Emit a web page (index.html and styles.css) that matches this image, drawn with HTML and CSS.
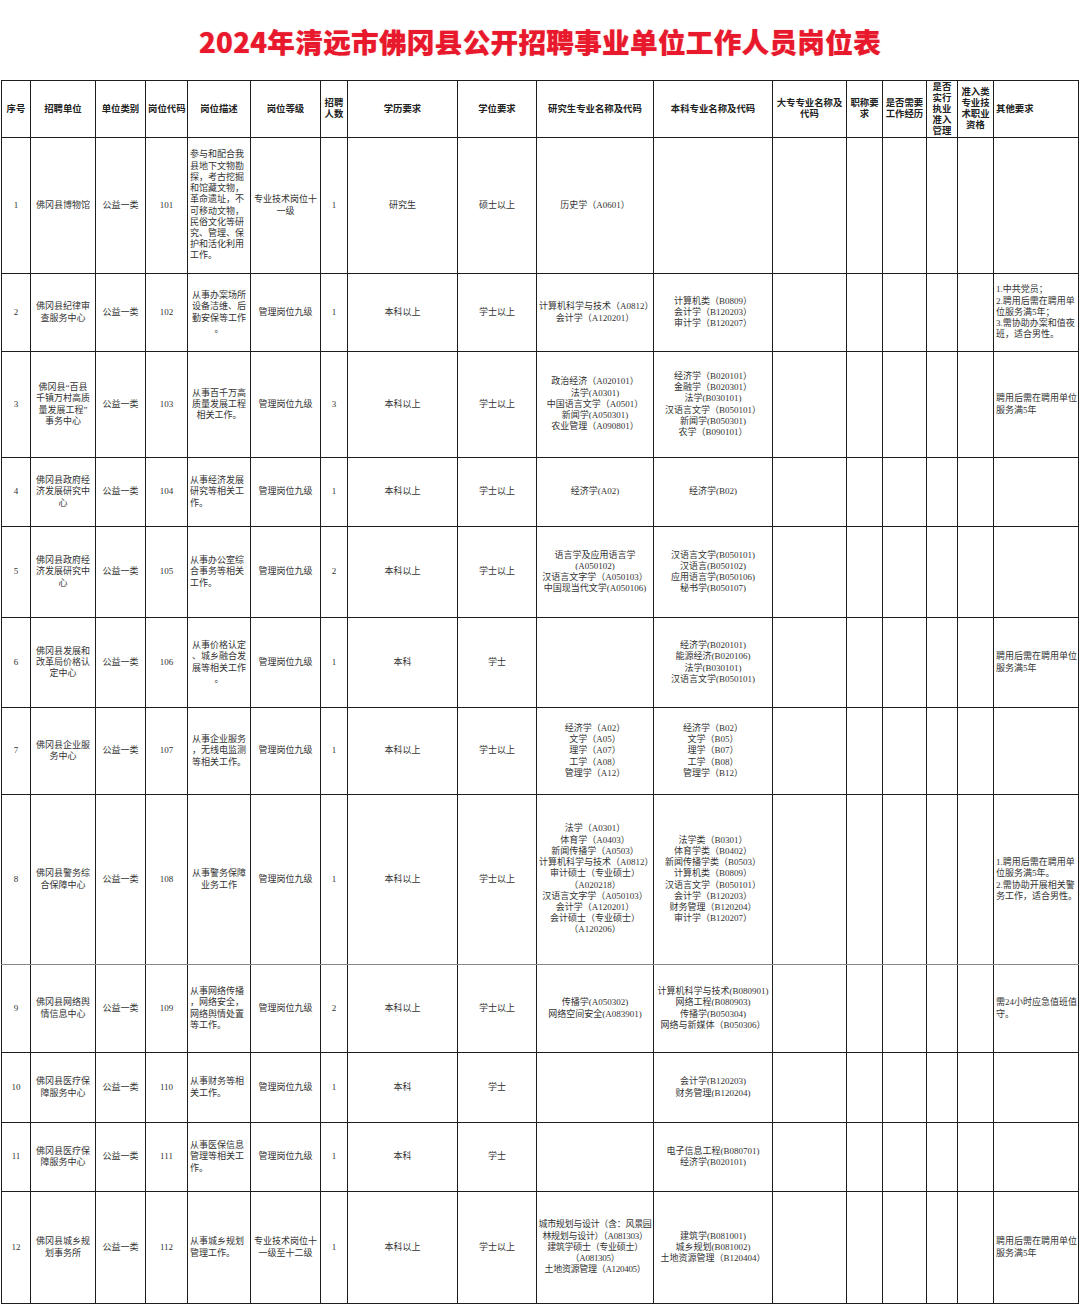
FILE: index.html
```html
<!DOCTYPE html>
<html lang="zh-CN">
<head>
<meta charset="utf-8">
<title>2024年清远市佛冈县公开招聘事业单位工作人员岗位表</title>
<link rel="stylesheet" href="styles.css">
</head>
<body>
<div class="title-bar"><h1 class="title">2024年清远市佛冈县公开招聘事业单位工作人员岗位表</h1></div>
<table class="jobs">
<colgroup>
<col class="c1"><col class="c2"><col class="c3"><col class="c4"><col class="c5"><col class="c6"><col class="c7"><col class="c8"><col class="c9"><col class="c10"><col class="c11"><col class="c12"><col class="c13"><col class="c14"><col class="c15"><col class="c16"><col class="c17">
</colgroup>
<thead>
<tr class="rh">
<th>序号</th><th>招聘单位</th><th>单位类别</th><th>岗位代码</th><th>岗位描述</th><th>岗位等级</th><th>招聘<br>人数</th><th>学历要求</th><th>学位要求</th><th>研究生专业名称及代码</th><th>本科专业名称及代码</th><th>大专专业名称及<br>代码</th><th>职称要<br>求</th><th class="g">是否需要<br>工作经历</th><th>是否<br>实行<br>执业<br>准入<br>管理</th><th class="g">准入类<br>专业技<br>术职业<br>资格</th><th class="l">其他要求</th>
</tr>
</thead>
<tbody>
<tr class="r1">
<td>1</td><td>佛冈县博物馆</td><td>公益一类</td><td>101</td><td class="l">参与和配合我<br>县地下文物勘<br>探，考古挖掘<br>和馆藏文物，<br>革命遗址，不<br>可移动文物，<br>民俗文化等研<br>究、管理、保<br>护和活化利用<br>工作。</td><td>专业技术岗位十<br>一级</td><td>1</td><td>研究生</td><td>硕士以上</td><td>历史学（A0601）</td><td></td><td></td><td></td><td class="g"></td><td></td><td class="g"></td><td class="l"></td>
</tr>
<tr class="r2">
<td>2</td><td>佛冈县纪律审<br>查服务中心</td><td>公益一类</td><td>102</td><td>从事办案场所<br>设备洁维、后<br>勤安保等工作<br>。</td><td>管理岗位九级</td><td>1</td><td>本科以上</td><td>学士以上</td><td>计算机科学与技术（A0812）<br>会计学（A120201）</td><td>计算机类（B0809）<br>会计学（B120203）<br>审计学（B120207）</td><td></td><td></td><td class="g"></td><td></td><td class="g"></td><td class="l">1.中共党员；<br>2.聘用后需在聘用单<br>位服务满5年；<br>3.需协助办案和值夜<br>班，适合男性。</td>
</tr>
<tr class="r3">
<td>3</td><td>佛冈县“百县<br>千镇万村高质<br>量发展工程”<br>事务中心</td><td>公益一类</td><td>103</td><td>从事百千万高<br>质量发展工程<br>相关工作。</td><td>管理岗位九级</td><td>3</td><td>本科以上</td><td>学士以上</td><td>政治经济（A020101）<br>法学(A0301)<br>中国语言文学（A0501）<br>新闻学(A050301)<br>农业管理（A090801）</td><td>经济学（B020101）<br>金融学（B020301）<br>法学(B030101)<br>汉语言文学（B050101）<br>新闻学(B050301)<br>农学（B090101）</td><td></td><td></td><td class="g"></td><td></td><td class="g"></td><td class="l">聘用后需在聘用单位<br>服务满5年</td>
</tr>
<tr class="r4">
<td>4</td><td>佛冈县政府经<br>济发展研究中<br>心</td><td>公益一类</td><td>104</td><td class="l">从事经济发展<br>研究等相关工<br>作。</td><td>管理岗位九级</td><td>1</td><td>本科以上</td><td>学士以上</td><td>经济学(A02)</td><td>经济学(B02)</td><td></td><td></td><td class="g"></td><td></td><td class="g"></td><td class="l"></td>
</tr>
<tr class="r5">
<td>5</td><td>佛冈县政府经<br>济发展研究中<br>心</td><td>公益一类</td><td>105</td><td class="l">从事办公室综<br>合事务等相关<br>工作。</td><td>管理岗位九级</td><td>2</td><td>本科以上</td><td>学士以上</td><td>语言学及应用语言学<br>(A050102)<br>汉语言文字学（A050103）<br>中国现当代文学(A050106)</td><td>汉语言文学(B050101)<br>汉语言(B050102)<br>应用语言学(B050106)<br>秘书学(B050107)</td><td></td><td></td><td class="g"></td><td></td><td class="g"></td><td class="l"></td>
</tr>
<tr class="r6">
<td>6</td><td>佛冈县发展和<br>改革局价格认<br>定中心</td><td>公益一类</td><td>106</td><td>从事价格认定<br>、城乡融合发<br>展等相关工作<br>。</td><td>管理岗位九级</td><td>1</td><td>本科</td><td>学士</td><td></td><td>经济学(B020101)<br>能源经济(B020106)<br>法学(B030101)<br>汉语言文学(B050101)</td><td></td><td></td><td class="g"></td><td></td><td class="g"></td><td class="l">聘用后需在聘用单位<br>服务满5年</td>
</tr>
<tr class="r7">
<td>7</td><td>佛冈县企业服<br>务中心</td><td>公益一类</td><td>107</td><td>从事企业服务<br>，无线电监测<br>等相关工作。</td><td>管理岗位九级</td><td>1</td><td>本科以上</td><td>学士以上</td><td>经济学（A02）<br>文学（A05）<br>理学（A07）<br>工学（A08）<br>管理学（A12）</td><td>经济学（B02）<br>文学（B05）<br>理学（B07）<br>工学（B08）<br>管理学（B12）</td><td></td><td></td><td class="g"></td><td></td><td class="g"></td><td class="l"></td>
</tr>
<tr class="r8">
<td>8</td><td>佛冈县警务综<br>合保障中心</td><td>公益一类</td><td>108</td><td>从事警务保障<br>业务工作</td><td>管理岗位九级</td><td>1</td><td>本科以上</td><td>学士以上</td><td>法学（A0301）<br>体育学（A0403）<br>新闻传播学（A0503）<br>计算机科学与技术（A0812）<br>审计硕士（专业硕士）<br>（A020218）<br>汉语言文字学（A050103）<br>会计学（A120201）<br>会计硕士（专业硕士）<br>（A120206）</td><td>法学类（B0301）<br>体育学类（B0402）<br>新闻传播学类（B0503）<br>计算机类（B0809）<br>汉语言文学（B050101）<br>会计学（B120203）<br>财务管理（B120204）<br>审计学（B120207）</td><td></td><td></td><td class="g"></td><td></td><td class="g"></td><td class="l">1.聘用后需在聘用单<br>位服务满5年。<br>2.需协助开展相关警<br>务工作，适合男性。</td>
</tr>
<tr class="r9">
<td>9</td><td>佛冈县网络舆<br>情信息中心</td><td>公益一类</td><td>109</td><td class="l">从事网络传播<br>，网络安全，<br>网络舆情处置<br>等工作。</td><td>管理岗位九级</td><td>2</td><td>本科以上</td><td>学士以上</td><td>传播学(A050302)<br>网络空间安全(A083901)</td><td>计算机科学与技术(B080901)<br>网络工程(B080903)<br>传播学(B050304)<br>网络与新媒体（B050306）</td><td></td><td></td><td class="g"></td><td></td><td class="g"></td><td class="l">需24小时应急值班值<br>守。</td>
</tr>
<tr class="r10">
<td>10</td><td>佛冈县医疗保<br>障服务中心</td><td>公益一类</td><td>110</td><td class="l">从事财务等相<br>关工作。</td><td>管理岗位九级</td><td>1</td><td>本科</td><td>学士</td><td></td><td>会计学(B120203)<br>财务管理(B120204)</td><td></td><td></td><td class="g"></td><td></td><td class="g"></td><td class="l"></td>
</tr>
<tr class="r11">
<td>11</td><td>佛冈县医疗保<br>障服务中心</td><td>公益一类</td><td>111</td><td class="l">从事医保信息<br>管理等相关工<br>作。</td><td>管理岗位九级</td><td>1</td><td>本科</td><td>学士</td><td></td><td>电子信息工程(B080701)<br>经济学(B020101)</td><td></td><td></td><td class="g"></td><td></td><td class="g"></td><td class="l"></td>
</tr>
<tr class="r12">
<td>12</td><td>佛冈县城乡规<br>划事务所</td><td>公益一类</td><td>112</td><td class="l">从事城乡规划<br>管理工作。</td><td>专业技术岗位十<br>一级至十二级</td><td>1</td><td>本科以上</td><td>学士以上</td><td class="tight">城市规划与设计（含：风景园<br>林规划与设计）（A081303）<br>建筑学硕士（专业硕士）<br>（A081305）<br>土地资源管理（A120405）</td><td>建筑学(B081001)<br>城乡规划(B081002)<br>土地资源管理（B120404）</td><td></td><td></td><td class="g"></td><td></td><td class="g"></td><td class="l">聘用后需在聘用单位<br>服务满5年</td>
</tr>
</tbody>
</table>
</body>
</html>
```
FILE: styles.css
```css
html, body {
  margin: 0;
  padding: 0;
  background: #ffffff;
}

.title-bar {
  height: 80px;
  display: flex;
  align-items: center;
  justify-content: center;
}

.title {
  margin: 0;
  padding-top: 1px;
  font-family: "Noto Sans CJK SC", "Noto Sans", sans-serif;
  font-size: 27.6px;
  font-weight: 900;
  color: #e8192c;
  letter-spacing: 0.3px;
  text-shadow: 0 0 1px rgba(232, 25, 44, 0.6);
}

.jobs {
  margin-left: 1px;
  width: 1078px;
  table-layout: fixed;
  border-collapse: collapse;
  font-family: "Liberation Serif", "Noto Sans CJK SC", serif;
  font-size: 9px;
  line-height: 11.2px;
  color: #333333;
}

.c1 { width: 29px; }
.c2 { width: 65px; }
.c3 { width: 50px; }
.c4 { width: 42px; }
.c5 { width: 63px; }
.c6 { width: 70px; }
.c7 { width: 27px; }
.c8 { width: 110px; }
.c9 { width: 79px; }
.c10 { width: 117px; }
.c11 { width: 119px; }
.c12 { width: 74px; }
.c13 { width: 36px; }
.c14 { width: 44px; }
.c15 { width: 31px; }
.c16 { width: 36px; }
.c17 { width: 85px; }

.jobs th,
.jobs td {
  border: 1px solid #1e1e1e;
  padding: 0 2px;
  text-align: center;
  vertical-align: middle;
  white-space: nowrap;
  overflow: hidden;
}

.jobs th {
  font-weight: 700;
  font-size: 9.4px;
  line-height: 11px;
  color: #222222;
}

.jobs .l {
  text-align: left;
}

.jobs .tight {
  padding: 0;
  letter-spacing: -0.3px;
}

.jobs .g {
  border-left-color: #777777;
}

.jobs thead tr {
  border-top: 1px solid #8a8a8a;
}

.rh { height: 57px; }
.r1 { height: 136px; }
.r2 { height: 78px; }
.r3 { height: 106px; }
.r4 { height: 69px; }
.r5 { height: 91px; }
.r6 { height: 90px; }
.r7 { height: 87px; }
.r8 { height: 170px; }
.r9 { height: 88px; }
.r10 { height: 70px; }
.r11 { height: 69px; }
.r12 { height: 112px; }

.r8 td {
  border-bottom-color: #888888;
}
```
